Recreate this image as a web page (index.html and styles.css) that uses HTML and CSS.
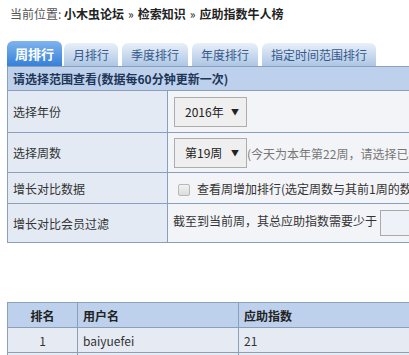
FILE: index.html
```html
<!DOCTYPE html>
<html lang="zh-CN">
<head>
	<meta charset="UTF-8">
	<title>应助指数牛人榜</title>
	<link rel="stylesheet" href="styles.css">
</head>
<body>
	<div class="crumb">当前位置: <b>小木虫论坛<span class="sep">»</span>检索知识<span class="sep">»</span>应助指数牛人榜</b></div>
	<ul class="tabs">
		<li class="on">周排行</li>
		<li>月排行</li>
		<li>季度排行</li>
		<li>年度排行</li>
		<li>指定时间范围排行</li>
	</ul>
	<table class="filter">
		<tr class="head">
			<td colspan="2">请选择范围查看(数据每60分钟更新一次)</td>
		</tr>
		<tr class="r-year">
			<td class="label">选择年份</td>
			<td><span class="select">2016年<i>▼</i></span></td>
		</tr>
		<tr class="r-week">
			<td class="label">选择周数</td>
			<td><span class="select">第19周<i>▼</i></span><span class="note">(今天为本年第22周，请选择已经结束的周数)</span></td>
		</tr>
		<tr class="r-cmp">
			<td class="label">增长对比数据</td>
			<td><span class="check"></span>查看周增加排行(选定周数与其前1周的数据对比)</td>
		</tr>
		<tr class="r-filter">
			<td class="label">增长对比会员过滤</td>
			<td>截至到当前周，其总应助指数需要少于 <span class="input"></span></td>
		</tr>
	</table>
	<table class="rank">
		<thead>
			<tr>
				<th class="no">排名</th>
				<th class="name">用户名</th>
				<th>应助指数</th>
			</tr>
		</thead>
		<tbody>
			<tr>
				<td class="no">1</td>
				<td>baiyuefei</td>
				<td>21</td>
			</tr>
			<tr>
				<td class="no">2</td>
				<td></td>
				<td></td>
			</tr>
		</tbody>
	</table>
</body>
</html>
```

FILE: styles.css
```css
html {
	overflow: hidden;
}
body {
	margin: 5px 0 0 7px;
	width: 760px;
	font-family: "Noto Sans CJK SC", "Liberation Sans", sans-serif;
	font-size: 12px;
	color: #333;
	background-color: #fff;
}
.crumb {
	line-height: 18px;
	padding-left: 3px;
	color: #555;
}
.crumb b {
	color: #222;
}
.crumb .sep {
	margin: 0 4px;
	font-weight: normal;
}
.tabs {
	display: flex;
	align-items: flex-end;
	list-style: none;
	margin: 18px 0 0 0;
	padding: 0;
}
.tabs li {
	height: 23px;
	line-height: 23px;
	padding: 0 9px;
	margin-right: 4px;
	border-radius: 6px 6px 0 0;
	color: #35598c;
	background: linear-gradient(#e8f0f9, #adc6e4);
}
.tabs li.on {
	height: 25px;
	line-height: 25px;
	padding: 0 8px;
	margin-right: 2px;
	font-size: 13px;
	color: #fff;
	font-weight: bold;
	background: linear-gradient(#80b4ee, #3580d8);
}
table {
	border-collapse: collapse;
}
td, th {
	border: 1px solid #8a9fba;
	padding: 0 5px;
	text-align: left;
}
.filter {
	width: 740px;
}
.filter .head td {
	height: 23px;
	background-color: #bdd1ec;
	color: #1d3557;
	font-weight: bold;
}
.filter td {
	background-color: #f3f4f8;
}
.filter td.label {
	width: 149px;
	background-color: #e3eaf3;
}
.r-year td {
	height: 41px;
}
.r-week td {
	height: 39px;
}
.r-cmp td {
	height: 30px;
}
.r-filter td {
	height: 38px;
}
.select {
	display: inline-flex;
	align-items: center;
	justify-content: space-between;
	box-sizing: border-box;
	width: 73px;
	height: 30px;
	padding: 0 7px 0 10px;
	margin-left: 1px;
	vertical-align: middle;
	border: 1px solid #adadad;
	background-color: #efefef;
	color: #222;
}
.select i {
	font-style: normal;
	font-size: 8px;
}
.note {
	color: #777;
	vertical-align: middle;
}
.check {
	display: inline-block;
	box-sizing: border-box;
	width: 12px;
	height: 12px;
	margin: 0 7px 0 5px;
	vertical-align: -2px;
	border: 1px solid #b8b8b8;
	border-radius: 2px;
	background: linear-gradient(#f2f2f2, #dcdcdc);
}
.input {
	display: inline-block;
	box-sizing: border-box;
	width: 80px;
	height: 26px;
	vertical-align: middle;
	border: 1px solid #a9a9a9;
	background-color: #eef2f8;
}
.rank {
	margin-top: 59px;
	width: 740px;
}
.rank th {
	height: 24px;
	background-color: #bdd1ec;
	color: #222;
	font-weight: bold;
}
.rank td {
	height: 24px;
	background-color: #e6ebf3;
}
.rank .no {
	width: 59px;
	text-align: center;
}
.rank .name {
	width: 150px;
}
```
